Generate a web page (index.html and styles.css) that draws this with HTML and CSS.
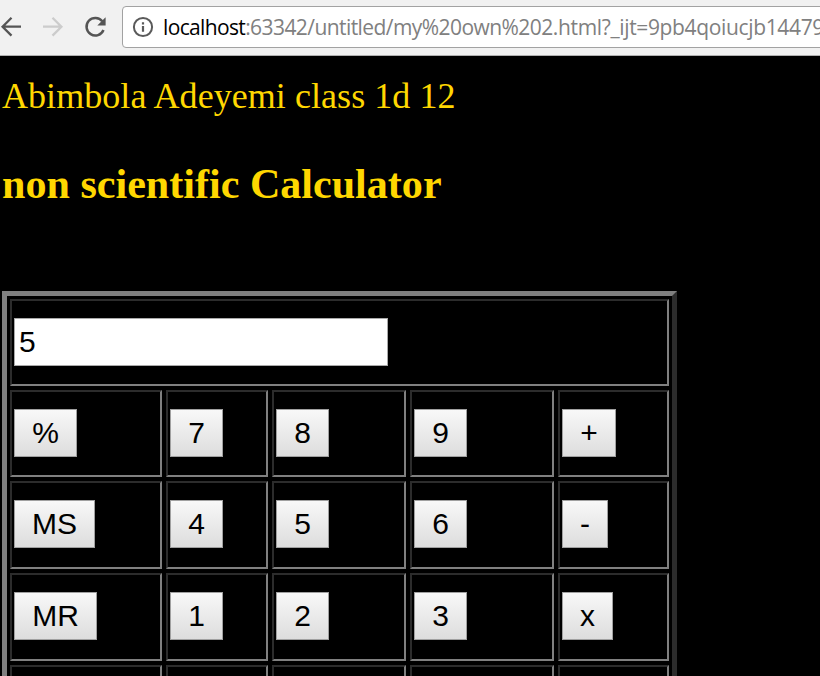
FILE: index.html
```html
<!DOCTYPE html>
<html lang="en">
<head>
<meta charset="utf-8">
<title>non scientific Calculator</title>
<link rel="stylesheet" href="styles.css">
</head>
<body>
<header class="toolbar">
  <svg class="nav" width="122" height="55" viewBox="0 0 122 55" fill="none" stroke-width="2.3">
    <path stroke="#555" d="M21 26.7H3M11.5 17.8L2.6 26.7L11.5 35.6"/>
    <path stroke="#ccc" d="M43 26.7H61M52.5 17.8L61.4 26.7L52.5 35.6"/>
    <path stroke="#555" stroke-width="2.5" d="M102.3 21.3A8.8 8.8 0 1 0 103.5 30"/>
    <path fill="#555" d="M105.6 17.3V25.5H97.3Z"/>
  </svg>
  <div class="address">
    <svg class="info" width="22" height="22" viewBox="0 0 22 22" fill="none" stroke="#5a5a5a">
      <circle cx="11" cy="11" r="9.1" stroke-width="2"/>
      <path stroke-width="2.2" d="M11 9.9V15.8M11 6.2V8.4"/>
    </svg>
    <span class="host">localhost</span><span class="path">:63342/untitled/my%20own%20<span class="file">2.html?</span><span class="query">_ijt=9pb4qoiucjb14479</span></span>
  </div>
</header>
<main>
  <p class="author">Abimbola Adeyemi class 1d 12</p>
  <h2>non scientific Calculator</h2>
  <div class="calculator">
    <div class="cell display"><input type="text" value="5" aria-label="Display"></div>
    <div class="cell"><button class="percent">%</button></div>
    <div class="cell"><button>7</button></div>
    <div class="cell"><button>8</button></div>
    <div class="cell"><button>9</button></div>
    <div class="cell"><button class="plus">+</button></div>
    <div class="cell"><button class="store">MS</button></div>
    <div class="cell"><button>4</button></div>
    <div class="cell"><button>5</button></div>
    <div class="cell"><button>6</button></div>
    <div class="cell"><button class="minus">-</button></div>
    <div class="cell"><button class="recall">MR</button></div>
    <div class="cell"><button>1</button></div>
    <div class="cell"><button>2</button></div>
    <div class="cell"><button>3</button></div>
    <div class="cell"><button class="times">x</button></div>
    <div class="cell"></div>
    <div class="cell"></div>
    <div class="cell"></div>
    <div class="cell"></div>
    <div class="cell"></div>
  </div>
</main>
</body>
</html>
```
FILE: styles.css
```css
* { box-sizing: border-box; }
body {
  margin: 0;
  height: 676px;
  overflow: hidden;
  background: #000;
  color: #ffd700;
  font-family: "Liberation Serif", serif;
}
.toolbar {
  display: flex;
  height: 56px;
  background: #f1f1f1;
  border-bottom: 1px solid #b0b0b0;
  overflow: hidden;
}
.nav { flex: none; }
.address {
  display: flex;
  align-items: center;
  flex: none;
  width: 720px;
  height: 42px;
  margin-top: 6px;
  padding-left: 9px;
  background: #fff;
  border: 1px solid #a2a2a2;
  border-radius: 4px;
  font: 21px/40px "Open Sans", sans-serif;
  white-space: nowrap;
}
.info { flex: none; margin-right: 9px; }
.host { color: #000; letter-spacing: -0.65px; }
.path { color: #808080; letter-spacing: -0.57px; }
.file { letter-spacing: -0.35px; }
.query { letter-spacing: -0.35px; }
main {
  height: 620px;
  padding-left: 2px;
  overflow: hidden;
}
.author {
  margin: 19px 0 0;
  font-size: 36px;
  line-height: 42px;
  letter-spacing: 0.06px;
}
h2 {
  margin: 43px 0 0;
  font-size: 42.1px;
  line-height: 48px;
}
.calculator {
  display: grid;
  grid-template-columns: 152px 102px 134px 144px 111px;
  grid-template-rows: 87px 87px 88px 88px 88px;
  gap: 4px;
  width: 675px;
  margin-top: 83px;
  padding: 3px;
  border: 5px solid;
  border-color: #808080 #2c2c2c #2c2c2c #808080;
}
.cell {
  padding: 17px 2px 0;
  border: 2px solid;
  border-color: #2c2c2c #808080 #808080 #2c2c2c;
}
.display { grid-column: 1 / -1; }
input, button {
  display: block;
  height: 48px;
  margin: 0;
  border-radius: 0;
  color: #000;
  font: 30px/46px "Liberation Sans", sans-serif;
}
input {
  width: 374px;
  padding: 0 4px;
  background: #fff;
  border: 1px solid #a9a9a9;
}
button {
  width: 53px;
  padding: 0;
  background: linear-gradient(#f8f8f8, #ddd);
  border: 1px solid #a0a0a0;
}
.percent { width: 63px; }
.plus { width: 54px; }
.minus { width: 46px; }
.times { width: 51px; }
.store { width: 81px; }
.recall { width: 83px; }
```
